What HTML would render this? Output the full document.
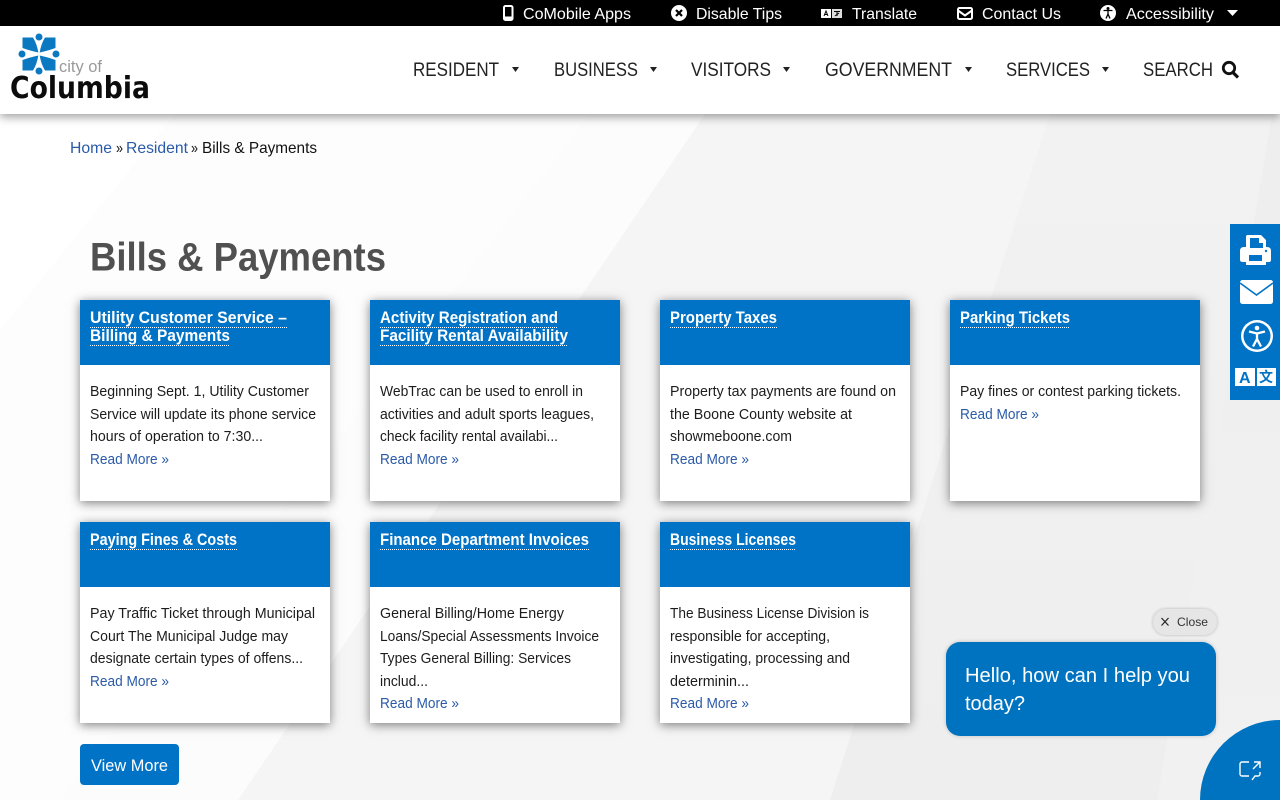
<!DOCTYPE html>
<html lang="en">
<head>
<meta charset="utf-8">
<title>Bills &amp; Payments</title>
<style>
html,body{margin:0;padding:0;width:1280px;height:800px;overflow:hidden;background:#fff;font-family:"Liberation Sans",sans-serif}
#bg{position:absolute;left:0;top:0}
#top{position:absolute;left:0;top:0;width:1280px;height:26px;background:#000}
#head{position:absolute;left:0;top:26px;width:1280px;height:88px;background:#fff;box-shadow:0 3px 9px rgba(0,0,0,.38)}
.card{position:absolute;width:250px;height:201px;background:#fff;box-shadow:0 2px 10px rgba(0,0,0,.5)}
.card i{display:block;height:65px;background:#0073c7}
#btn{position:absolute;left:80px;top:744px;width:99px;height:41px;background:#0073c7;border-radius:4px}
#side{position:absolute;left:1230px;top:224px;width:50px;height:176px;background:#0073c7}
#bubble{position:absolute;left:946px;top:642px;width:270px;height:94px;background:#0073c0;border-radius:14px;box-shadow:0 0 4px rgba(0,0,0,.2)}
#pill{position:absolute;left:1153px;top:609px;width:64px;height:26px;background:#e6e6e6;border-radius:13px;box-shadow:0 0 3px rgba(0,0,0,.25)}
#over{position:absolute;left:0;top:0}
svg{display:block}
text{font-family:"Liberation Sans",sans-serif}
.t{font-size:16px;fill:#fff}
.n{font-size:19px;fill:#222}
.b{font-size:16px;fill:#111}
.l{fill:#2a5aa8}
.ct{font-size:17px;font-weight:bold;fill:#fff}
.p{font-size:15px;fill:#1c1c1c}
.r{font-size:15px;fill:#2a5aa8}
.u{stroke:#fff;stroke-width:1;stroke-dasharray:1 1;fill:none}
</style>
</head>
<body>
<svg id="bg" width="1280" height="800" viewBox="0 0 1280 800">
<defs>
<linearGradient id="g1" x1="0" y1="0" x2="0" y2="1"><stop offset="0" stop-color="#f2f2f2"/><stop offset="1" stop-color="#eeeeee"/></linearGradient>
<linearGradient id="g2" x1="0" y1="0" x2="0" y2="1"><stop offset="0" stop-color="#eeeeee"/><stop offset="1" stop-color="#f1f1f1"/></linearGradient>
</defs>
<rect width="1280" height="800" fill="#ffffff"/>
<polygon points="175,114 0,330 0,800 238,800 705,114" fill="#fdfdfd"/>
<polygon points="0,800 238,800 705,114 590,114 60,800" fill="#fcfcfc"/>
<polygon points="705,114 238,800 1280,800 1280,114" fill="#f5f5f5"/>
<polygon points="1050,114 830,800 1280,800 1280,114" fill="url(#g1)"/>
<polygon points="1272,114 1157,800 1280,800 1280,114" fill="url(#g2)"/>
</svg>

<div class="card" style="left:80px;top:300px"><i></i></div>
<div class="card" style="left:370px;top:300px"><i></i></div>
<div class="card" style="left:660px;top:300px"><i></i></div>
<div class="card" style="left:950px;top:300px"><i></i></div>
<div class="card" style="left:80px;top:522px"><i></i></div>
<div class="card" style="left:370px;top:522px"><i></i></div>
<div class="card" style="left:660px;top:522px"><i></i></div>
<div id="btn"></div>
<div id="side"></div>
<div id="pill"></div>
<div id="bubble"></div>
<div id="head"></div>
<div id="top"></div>

<svg id="over" width="1280" height="800" viewBox="0 0 1280 800">
<!-- chat launcher -->
<path d="M1280 720A80 80 0 0 0 1200 800H1280Z" fill="#0073c0"/>
<g fill="none" stroke="#fff" stroke-width="1.4">
<path d="M1249 762H1242a2 2 0 0 0-2 2V774a2 2 0 0 0 2 2H1249"/>
<path d="M1254 762H1260V768M1260 762L1253 769"/>
<path d="M1260 772V774a2 2 0 0 1-2 2H1255L1252 780"/>
</g>

<!-- top bar -->
<rect x="504" y="6" width="8.500" height="14" rx="1.500" fill="none" stroke="#fff" stroke-width="2"/>
<rect x="504" y="16.500" width="8.500" height="3.500" fill="#fff"/>
<circle cx="679" cy="13" r="8" fill="#fff"/>
<path d="M676 10l6 6M682 10l-6 6" stroke="#000" stroke-width="2.200"/>
<rect x="821" y="9" width="10" height="9" fill="#fff"/>
<rect x="832" y="9" width="10" height="9" fill="#ddd"/>
<path d="M824 16l2-5 2 5M825 14.500h2" stroke="#000" stroke-width="1" fill="none"/>
<path d="M834 11.500h6M837 11v5M835 16l4-3" stroke="#000" stroke-width="1" fill="none"/>
<rect x="958" y="8" width="14" height="11" rx="1.500" fill="none" stroke="#fff" stroke-width="2"/>
<path d="M958 10.500l7 5 7-5" fill="none" stroke="#fff" stroke-width="2"/>
<circle cx="1108" cy="13" r="8" fill="#fff"/>
<circle cx="1108" cy="8.500" r="1.500" fill="#000"/>
<path d="M1103.500 10.500h9M1108 10.500v4M1108 14l-2 4.500M1108 14l2 4.500" stroke="#000" stroke-width="1.300" fill="none"/>
<polygon points="1227,10 1238,10 1232.500,16" fill="#fff"/>
<text class="t" x="523" y="19" textLength="108" lengthAdjust="spacingAndGlyphs">CoMobile Apps</text>
<text class="t" x="696" y="19" textLength="86" lengthAdjust="spacingAndGlyphs">Disable Tips</text>
<text class="t" x="852" y="19" textLength="65" lengthAdjust="spacingAndGlyphs">Translate</text>
<text class="t" x="982" y="19" textLength="79" lengthAdjust="spacingAndGlyphs">Contact Us</text>
<text class="t" x="1126" y="19" textLength="88" lengthAdjust="spacingAndGlyphs">Accessibility</text>

<!-- logo -->
<g fill="#0b78c2">
<path d="M22.500 37.500H33Q37 44 38.300 52.500Q31 51 22.500 48Z"/>
<path d="M55.500 37.500H45Q41 44 39.700 52.500Q47 51 55.500 48Z"/>
<path d="M22.500 70.500H33Q37 64 38.300 55.500Q31 57 22.500 60Z"/>
<path d="M55.500 70.500H45Q41 64 39.700 55.500Q47 57 55.500 60Z"/>
<circle cx="39" cy="37" r="3.500"/><circle cx="39" cy="71" r="3.500"/>
<circle cx="22" cy="54" r="3.500"/><circle cx="56" cy="54" r="3.500"/>
</g>
<text x="59" y="72" font-size="17" fill="#9a9a9a" textLength="43" lengthAdjust="spacingAndGlyphs">city of</text>
<text x="10" y="98" font-size="30" font-weight="bold" fill="#0c0c0c" style="font-family:'DejaVu Sans',sans-serif" textLength="140" lengthAdjust="spacingAndGlyphs">Columbia</text>

<!-- nav -->
<text class="n" x="413" y="76" textLength="86" lengthAdjust="spacingAndGlyphs">RESIDENT</text>
<text class="n" x="554" y="76" textLength="84" lengthAdjust="spacingAndGlyphs">BUSINESS</text>
<text class="n" x="691" y="76" textLength="80" lengthAdjust="spacingAndGlyphs">VISITORS</text>
<text class="n" x="825" y="76" textLength="127" lengthAdjust="spacingAndGlyphs">GOVERNMENT</text>
<text class="n" x="1006" y="76" textLength="84" lengthAdjust="spacingAndGlyphs">SERVICES</text>
<text class="n" x="1143" y="76" textLength="70" lengthAdjust="spacingAndGlyphs">SEARCH</text>
<g fill="#222">
<polygon points="512,67 519,67 515.500,72"/>
<polygon points="650,67 657,67 653.500,72"/>
<polygon points="783,67 790,67 786.500,72"/>
<polygon points="965,67 972,67 968.500,72"/>
<polygon points="1102,67 1109,67 1105.500,72"/>
</g>
<circle cx="1229" cy="68" r="5.700" fill="none" stroke="#111" stroke-width="2.800"/>
<path d="M1233 72.500l5 5" stroke="#111" stroke-width="3.200" fill="none"/>

<!-- breadcrumb -->
<text class="b l" x="70" y="153" textLength="42" lengthAdjust="spacingAndGlyphs">Home</text>
<text class="b" x="116" y="153" textLength="7" lengthAdjust="spacingAndGlyphs">»</text>
<text class="b l" x="126" y="153" textLength="62" lengthAdjust="spacingAndGlyphs">Resident</text>
<text class="b" x="191" y="153" textLength="7" lengthAdjust="spacingAndGlyphs">»</text>
<text class="b" x="202" y="153" textLength="115" lengthAdjust="spacingAndGlyphs">Bills &amp; Payments</text>

<!-- heading -->
<text x="90" y="270.500" font-size="40" font-weight="bold" fill="#505050" textLength="296" lengthAdjust="spacingAndGlyphs">Bills &amp; Payments</text>

<!-- card titles -->
<text class="ct" x="90" y="323" textLength="197" lengthAdjust="spacingAndGlyphs">Utility Customer Service –</text>
<text class="ct" x="90" y="341" textLength="140" lengthAdjust="spacingAndGlyphs">Billing &amp; Payments</text>
<text class="ct" x="380" y="323" textLength="178" lengthAdjust="spacingAndGlyphs">Activity Registration and</text>
<text class="ct" x="380" y="341" textLength="188" lengthAdjust="spacingAndGlyphs">Facility Rental Availability</text>
<text class="ct" x="670" y="323" textLength="107" lengthAdjust="spacingAndGlyphs">Property Taxes</text>
<text class="ct" x="960" y="323" textLength="110" lengthAdjust="spacingAndGlyphs">Parking Tickets</text>
<text class="ct" x="90" y="545" textLength="147" lengthAdjust="spacingAndGlyphs">Paying Fines &amp; Costs</text>
<text class="ct" x="380" y="545" textLength="209" lengthAdjust="spacingAndGlyphs">Finance Department Invoices</text>
<text class="ct" x="670" y="545" textLength="126" lengthAdjust="spacingAndGlyphs">Business Licenses</text>
<path class="u" d="M90 327.500H287M90 345.500H230M380 327.500H558M380 345.500H568M670 327.500H777M960 327.500H1070M90 549.500H237M380 549.500H589M670 549.500H796"/>

<!-- card bodies -->
<text class="p" x="90" y="396" textLength="219" lengthAdjust="spacingAndGlyphs">Beginning Sept. 1, Utility Customer</text>
<text class="p" x="90" y="419" textLength="226" lengthAdjust="spacingAndGlyphs">Service will update its phone service</text>
<text class="p" x="90" y="441" textLength="173" lengthAdjust="spacingAndGlyphs">hours of operation to 7:30...</text>
<text class="r" x="90" y="464" textLength="79" lengthAdjust="spacingAndGlyphs">Read More »</text>

<text class="p" x="380" y="396" textLength="203" lengthAdjust="spacingAndGlyphs">WebTrac can be used to enroll in</text>
<text class="p" x="380" y="419" textLength="214" lengthAdjust="spacingAndGlyphs">activities and adult sports leagues,</text>
<text class="p" x="380" y="441" textLength="178" lengthAdjust="spacingAndGlyphs">check facility rental availabi...</text>
<text class="r" x="380" y="464" textLength="79" lengthAdjust="spacingAndGlyphs">Read More »</text>

<text class="p" x="670" y="396" textLength="226" lengthAdjust="spacingAndGlyphs">Property tax payments are found on</text>
<text class="p" x="670" y="419" textLength="182" lengthAdjust="spacingAndGlyphs">the Boone County website at</text>
<text class="p" x="670" y="441" textLength="122" lengthAdjust="spacingAndGlyphs">showmeboone.com</text>
<text class="r" x="670" y="464" textLength="79" lengthAdjust="spacingAndGlyphs">Read More »</text>

<text class="p" x="960" y="396" textLength="221" lengthAdjust="spacingAndGlyphs">Pay fines or contest parking tickets.</text>
<text class="r" x="960" y="419" textLength="79" lengthAdjust="spacingAndGlyphs">Read More »</text>

<text class="p" x="90" y="618" textLength="225" lengthAdjust="spacingAndGlyphs">Pay Traffic Ticket through Municipal</text>
<text class="p" x="90" y="641" textLength="198" lengthAdjust="spacingAndGlyphs">Court The Municipal Judge may</text>
<text class="p" x="90" y="663" textLength="213" lengthAdjust="spacingAndGlyphs">designate certain types of offens...</text>
<text class="r" x="90" y="686" textLength="79" lengthAdjust="spacingAndGlyphs">Read More »</text>

<text class="p" x="380" y="618" textLength="184" lengthAdjust="spacingAndGlyphs">General Billing/Home Energy</text>
<text class="p" x="380" y="641" textLength="219" lengthAdjust="spacingAndGlyphs">Loans/Special Assessments Invoice</text>
<text class="p" x="380" y="663" textLength="191" lengthAdjust="spacingAndGlyphs">Types General Billing: Services</text>
<text class="p" x="380" y="686" textLength="48" lengthAdjust="spacingAndGlyphs">includ...</text>
<text class="r" x="380" y="708" textLength="79" lengthAdjust="spacingAndGlyphs">Read More »</text>

<text class="p" x="670" y="618" textLength="199" lengthAdjust="spacingAndGlyphs">The Business License Division is</text>
<text class="p" x="670" y="641" textLength="160" lengthAdjust="spacingAndGlyphs">responsible for accepting,</text>
<text class="p" x="670" y="663" textLength="180" lengthAdjust="spacingAndGlyphs">investigating, processing and</text>
<text class="p" x="670" y="686" textLength="79" lengthAdjust="spacingAndGlyphs">determinin...</text>
<text class="r" x="670" y="708" textLength="79" lengthAdjust="spacingAndGlyphs">Read More »</text>

<!-- button -->
<text x="91" y="771" font-size="17" fill="#fff" textLength="77" lengthAdjust="spacingAndGlyphs">View More</text>

<!-- side toolbar -->
<path fill="#fff" d="M1247 235H1261L1266 240V247H1267Q1271 247 1271 251V260Q1271 262 1269 262H1266V265H1246V262H1243Q1240 262 1240 260V251Q1240 247 1244 247H1246V236Z"/>
<path fill="#0073c7" d="M1250 238H1259V243H1263V248H1250ZM1249 255H1262V261H1249Z"/>
<circle cx="1266" cy="251" r="1.200" fill="#0073c7"/>
<rect x="1240" y="280" width="33" height="24" rx="2.500" fill="#fff"/>
<path d="M1240 283L1256.500 295L1273 283" fill="none" stroke="#0073c7" stroke-width="1.600"/>
<circle cx="1257" cy="336" r="16" fill="#fff"/>
<circle cx="1257" cy="336" r="13.500" fill="#0073c7"/>
<circle cx="1257" cy="328" r="2.300" fill="#fff"/>
<path d="M1249 331.500L1257 333.500L1265 331.500M1257 333V339M1257 339L1253 346.500M1257 339L1261 346.500" fill="none" stroke="#fff" stroke-width="2.300"/>
<rect x="1235" y="368" width="20" height="18" fill="#fff"/>
<rect x="1257" y="368" width="19" height="18" fill="#fff"/>
<text x="1239" y="383" font-size="16" font-weight="bold" fill="#0073c7">A</text>
<text x="1259" y="382" font-size="14" font-weight="bold" fill="#0073c7" style="font-family:'Liberation Sans','Noto Sans CJK SC',sans-serif">文</text>

<!-- chat -->
<path d="M1161.500 618l7 7.500M1168.500 618l-7 7.500" stroke="#222" stroke-width="1.200" fill="none"/>
<text x="1177" y="626" font-size="12" fill="#333" textLength="31" lengthAdjust="spacingAndGlyphs">Close</text>
<text x="965" y="682" font-size="20" fill="#fff" textLength="225" lengthAdjust="spacingAndGlyphs">Hello, how can I help you</text>
<text x="965" y="710" font-size="20" fill="#fff" textLength="60" lengthAdjust="spacingAndGlyphs">today?</text>
</svg>
</body>
</html>
